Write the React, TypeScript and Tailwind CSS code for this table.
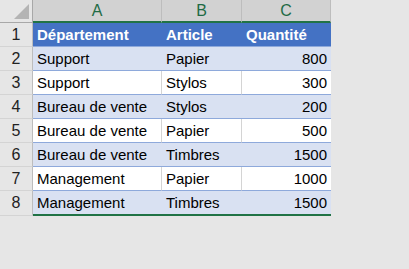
const rows = [
  { dept: "Support", item: "Papier", qty: "800" },
  { dept: "Support", item: "Stylos", qty: "300" },
  { dept: "Bureau de vente", item: "Stylos", qty: "200" },
  { dept: "Bureau de vente", item: "Papier", qty: "500" },
  { dept: "Bureau de vente", item: "Timbres", qty: "1500" },
  { dept: "Management", item: "Papier", qty: "1000" },
  { dept: "Management", item: "Timbres", qty: "1500" },
];

const cols = ["A", "B", "C"];

export default function App() {
  return (
    <div
      className="w-[409px] h-[269px] bg-[#e6e6e6] text-[15px] leading-none"
      style={{ fontFamily: '"Liberation Sans", Arial, sans-serif' }}
    >
      <div className="grid grid-cols-[33px_129px_80px_89px] w-[331px]">
        {/* column headers */}
        <div className="h-[23px] bg-[#e6e6e6] border-r border-b border-[#a8a8a8] flex items-end justify-end pr-[3px] pb-[3px]">
          <div className="w-0 h-0 border-l-[15px] border-l-transparent border-b-[15px] border-b-[#b4b4b4]" />
        </div>
        {cols.map((c) => (
          <div
            key={c}
            className="h-[23px] bg-[#d2d2d2] border-r border-[#bdbdbd] border-b-2 border-b-[#217346] flex items-center justify-center text-[#1f6b45] text-[16px]"
          >
            {c}
          </div>
        ))}

        {/* header row */}
        <div className="h-[24px] bg-[#e6e6e6] border-r border-[#bdbdbd] border-b border-b-[#d4d4d4] flex items-center justify-center text-[#222] text-[16px]">
          1
        </div>
        <div className="h-[24px] bg-[#4472c4] border-b border-[#8ea9db] flex items-center pl-[4px] font-bold text-white">
          Département
        </div>
        <div className="h-[24px] bg-[#4472c4] border-b border-[#8ea9db] flex items-center pl-[4px] font-bold text-white">
          Article
        </div>
        <div className="h-[24px] bg-[#4472c4] border-b border-[#8ea9db] flex items-center pl-[4px] font-bold text-white">
          Quantité
        </div>

        {rows.map((r, i) => {
          const band = i % 2 === 0;
          const last = i === rows.length - 1;
          const cell = band
            ? "bg-[#d9e1f2]"
            : "bg-white border-r border-r-[#d4d4d4]";
          const bottom = last
            ? "h-[25px] border-b-2 border-b-[#217346]"
            : "h-[24px] border-b border-b-[#8ea9db]";
          return (
            <div key={i} className="contents">
              <div
                className={`${last ? "h-[25px]" : "h-[24px]"} bg-[#e6e6e6] border-r border-[#bdbdbd] border-b border-b-[#d4d4d4] flex items-center justify-center text-[#222] text-[16px]`}
              >
                {i + 2}
              </div>
              <div className={`${cell} ${bottom} flex items-center pl-[4px] text-black`}>
                {r.dept}
              </div>
              <div className={`${cell} ${bottom} flex items-center pl-[4px] text-black`}>
                {r.item}
              </div>
              <div className={`${band ? "bg-[#d9e1f2]" : "bg-white"} ${bottom} flex items-center justify-end pr-[4px] text-black`}>
                {r.qty}
              </div>
            </div>
          );
        })}
      </div>
    </div>
  );
}
